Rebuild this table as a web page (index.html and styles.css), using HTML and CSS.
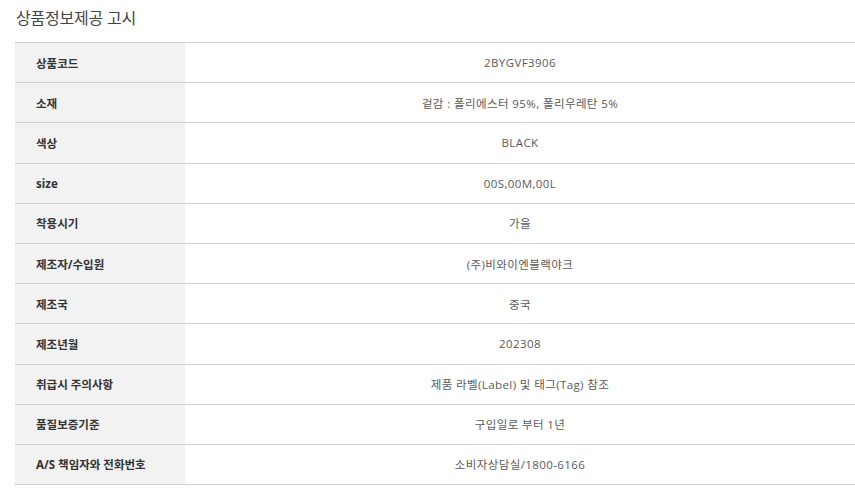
FILE: index.html
```html
<!DOCTYPE html>
<html lang="ko">
<head>
<meta charset="utf-8">
<link rel="stylesheet" href="styles.css">
</head>
<body>
<div class="notice">
  <h2 class="notice-title">상품정보제공 고시</h2>
  <table class="info-table">
    <tbody>
      <tr><th>상품코드</th><td>2BYGVF3906</td></tr>
      <tr><th>소재</th><td>겉감 : 폴리에스터 95%, 폴리우레탄 5%</td></tr>
      <tr><th>색상</th><td>BLACK</td></tr>
      <tr><th>size</th><td>00S,00M,00L</td></tr>
      <tr><th>착용시기</th><td>가을</td></tr>
      <tr><th>제조자/수입원</th><td>(주)비와이엔블랙야크</td></tr>
      <tr><th>제조국</th><td>중국</td></tr>
      <tr><th>제조년월</th><td>202308</td></tr>
      <tr><th>취급시 주의사항</th><td>제품 라벨(Label) 및 태그(Tag) 참조</td></tr>
      <tr><th>품질보증기준</th><td>구입일로 부터 1년</td></tr>
      <tr><th>A/S 책임자와 전화번호</th><td>소비자상담실/1800-6166</td></tr>
    </tbody>
  </table>
</div>
</body>
</html>
```
FILE: styles.css
```css
html, body {
  margin: 0;
  padding: 0;
  background: #fff;
}
body {
  font-family: "Noto Sans", "Noto Sans CJK KR", sans-serif;
  color: #333;
}
.notice {
  padding: 6px 0 0 15px;
}
.notice-title {
  margin: 0 0 12px 1px;
  font-size: 16px;
  line-height: 24px;
  font-weight: 400;
  color: #444;
  letter-spacing: -0.2px;
}
.info-table {
  width: 840px;
  border-collapse: collapse;
  border-top: 1px solid #cfcfcf;
  table-layout: fixed;
}
.info-table th,
.info-table td {
  height: 39.2px;
  padding: 0;
  border-bottom: 1px solid #cfcfcf;
  vertical-align: middle;
}
.info-table th {
  width: 170px;
  background: #f2f2f2;
  text-align: left;
  padding-left: 21px;
  box-sizing: border-box;
  font-size: 11.5px;
  font-weight: 700;
  color: #333;
}
.info-table td {
  text-align: center;
  color: #5a5a5a;
  font-family: "Open Sans", "Noto Sans CJK KR", sans-serif;
  font-size: 11.5px;
  letter-spacing: 0.4px;
}
```
